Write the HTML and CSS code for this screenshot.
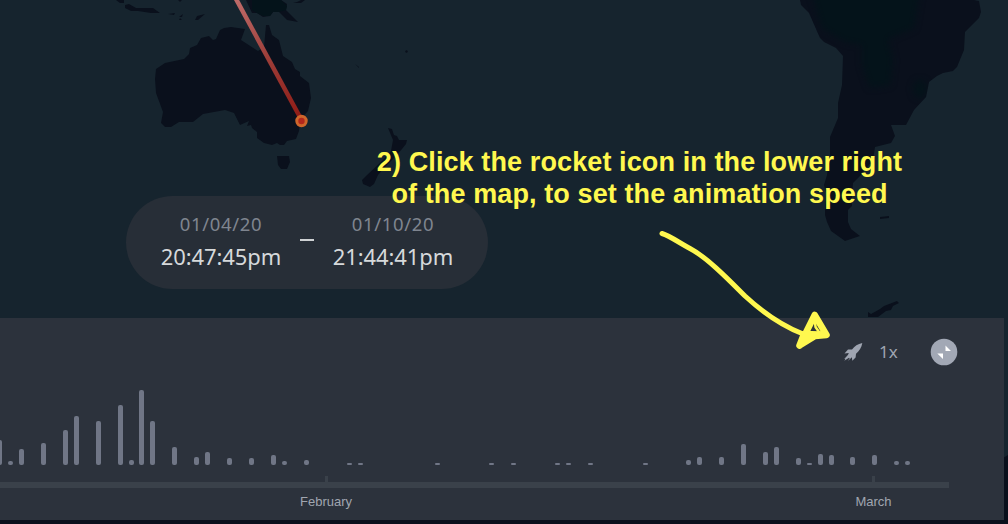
FILE: index.html
```html
<!DOCTYPE html>
<html lang="en">
<head>
<meta charset="utf-8">
<title>Trip map timeline</title>
<link rel="stylesheet" href="styles.css">
</head>
<body>
<main class="app">
  <svg class="map" viewBox="0 0 1008 524" aria-hidden="true">
    <defs>
      <linearGradient id="arc" gradientUnits="userSpaceOnUse" x1="236" y1="0" x2="301" y2="119">
        <stop offset="0" stop-color="#bf6b69"/><stop offset=".5" stop-color="#9c3d38"/><stop offset="1" stop-color="#8f1b15"/>
      </linearGradient>
      <filter id="soft" x="-20%" y="-20%" width="140%" height="140%" color-interpolation-filters="sRGB"><feGaussianBlur stdDeviation="3"/></filter>
      <clipPath id="continent"><path d="M800 0L801 5L809 13L820 38L824 42L836 48L843 56L842 85L838 103L838 118L830 137L830 155L827 175L824 185L825 205L825 215L827 222L831 231L845 241L860 236L851 229L848 222L848 210L852 206L852 194L853 183L860 176L873 160L875 147L891 143L895 136L891 125L906 125L914 110L926 97L929 82L937 76L943 73L953 71L957 67L964 50L965 32L979 18L981 12L979 1L974 0Z"/></clipPath>
    </defs>
    <g class="land">
      <path d="M155 79L156 69L165 63L184 59L189 54L190 48L197 45L201 38L209 36L213 40L216 39L220 30L224 28L231 27L245 29L241 40L258 51L264 47L266 25L269 25L272 35L279 40L283 56L292 62L295 69L300 72L300 76L309 83L311 98L308 111L300 120L299 131L296 139L287 141L284 145L280 145L277 143L272 145L264 143L257 138L257 132L252 128L251 125L247 126L249 121L240 125L234 113L225 110L203 114L193 122L179 122L171 127L165 127L161 123L163 112L156 93Z"/>
      <path d="M277 156H289L290 162L287 169H281L278 165Z"/>
      <path d="M116 0H124V3H120ZM125 5L129 4L136 8L153 8L160 13L151 13L138 11H131L125 8ZM168 14L175 13L174 15ZM179 17L183 14L182 17ZM195 20L197 16L205 14L198 20ZM180 18L182 20H179ZM178 0H182L180 2ZM293 3L301 3L305 0H301L297 2Z"/>
      <path d="M246 0L252 13L257 13L263 17L270 16L273 12L279 12L287 20L298 22L293 17L286 10L287 4L281 0Z"/>
      <path d="M388 128L392 129L394 135L397 136L399 140H407L406 144L402 149L395 157L385 167L378 175L374 184L370 187L363 184L362 180L366 176L383 160L391 151L393 140ZM405 51L407 50L408 52L406 53ZM355 64L359 67L359 68Z"/>
      <path d="M800 0L801 5L809 13L820 38L824 42L836 48L843 56L842 85L838 103L838 118L830 137L830 155L827 175L824 185L826 193L825 205L825 215L827 222L831 231L845 241L860 236L851 229L848 222L848 210L852 206L852 194L853 183L860 176L873 160L875 147L891 143L895 136L891 125L906 125L914 110L926 97L929 82L937 76L943 73L953 71L957 67L964 50L965 32L979 18L981 12L979 1L974 0Z"/>
      <path d="M880 217L889 216L889 218L880 219ZM868 312L871 314L880 309L884 306L897 301L899 303L893 306L891 310L886 311L878 317H868ZM1003 458L1008 455V524H0V519H1003Z"/>
    </g>
    <g clip-path="url(#continent)">
      <g class="forest" filter="url(#soft)">
        <path d="M808 -20H922L914 28L888 39L893 60L890 85L870 88L862 65L862 45L845 42L822 28Z"/>
        <ellipse cx="920" cy="89" rx="7" ry="9"/>
      </g>
    </g>
    <path class="forest" d="M252 0H281L287 6L286 10L279 12H273L270 16H263L257 13L252 10Z"/>
    <path class="arc" d="M235.500 -2L301 119"/>
    <circle class="stop" cx="301.500" cy="121" r="4.700"/>
  </svg>

  <section class="range">
    <div class="moment"><span class="date">01/04/20</span><span class="time">20:47:45pm</span></div>
    <span class="dash"></span>
    <div class="moment"><span class="date">01/10/20</span><span class="time">21:44:41pm</span></div>
  </section>

  <section class="timeline">
    <div class="controls">
      <svg class="rocket" viewBox="0 0 20 20"><path d="M19.300 1C14.800 2 11.600 4.200 9 7.400L5 7.600L1.500 11.500L5.800 10.900L4.900 13L1.200 16.900L2.600 16.800L1.300 18.800L6 15.800L6.700 16.200L4.800 19L8.900 15.300L9.300 18.700L12.600 15.500L13 11.700C16.300 8.800 18.600 5.600 19.300 1Z"/></svg>
      <span class="speed">1x</span>
      <svg class="collapse" viewBox="0 0 28 28"><circle cx="14" cy="14" r="13.300"/><path d="M15.500 7.500L21 13H15.500ZM7.300 15.500H13V21Z"/></svg>
    </div>
    <div class="bars">
      <i style="--n:1;--h:25px"></i><i style="--n:2;--h:4px"></i><i style="--n:3;--h:16px"></i><i style="--n:5;--h:22px"></i><i style="--n:7;--h:35px"></i><i style="--n:8;--h:49px"></i><i style="--n:10;--h:44px"></i><i style="--n:12;--h:60px"></i><i style="--n:13;--h:5px"></i><i style="--n:14;--h:75.500px"></i><i style="--n:15;--h:44px"></i><i style="--n:17;--h:18px"></i><i style="--n:19;--h:8px"></i><i style="--n:20;--h:13px"></i><i style="--n:22;--h:7px"></i><i style="--n:24;--h:7px"></i><i style="--n:26;--h:10px"></i><i style="--n:27;--h:4px"></i><i style="--n:29;--h:5px"></i><i style="--n:33;--h:2px"></i><i style="--n:34;--h:2px"></i><i style="--n:41;--h:2px"></i><i style="--n:46;--h:2px"></i><i style="--n:48;--h:2px"></i><i style="--n:52;--h:2px"></i><i style="--n:53;--h:2px"></i><i style="--n:55;--h:2px"></i><i style="--n:60;--h:2px"></i><i style="--n:64;--h:5px"></i><i style="--n:65;--h:8px"></i><i style="--n:67;--h:8px"></i><i style="--n:69;--h:21px"></i><i style="--n:71;--h:13px"></i><i style="--n:72;--h:18px"></i><i style="--n:74;--h:7px"></i><i style="--n:75;--h:2px"></i><i style="--n:76;--h:11px"></i><i style="--n:77;--h:10px"></i><i style="--n:79;--h:8px"></i><i style="--n:81;--h:10px"></i><i style="--n:83;--h:4px"></i><i style="--n:84;--h:4px"></i>
    </div>
    <div class="axis">
      <span class="month feb">February</span>
      <span class="month mar">March</span>
    </div>
  </section>

  <p class="note"><span class="first">2) Click the rocket icon in the lower right</span><span class="second">of the map, to set the animation speed</span></p>
  <svg class="arrow" viewBox="0 0 1008 524" aria-hidden="true">
    <path d="M662 233.500C670 236 678 242 690 248.500C708 258 730 281 745 296C758 308 778 324 802 333.500"/>
    <path class="head" d="M799.500 345.500L814.700 315L826.500 335L815 336L799.500 345.500L804 334L820 334.500"/>
    <path class="nib" d="M815 322L815.500 327L819 332"/>
  </svg>
</main>
</body>
</html>
```

FILE: styles.css
```css
* { box-sizing: border-box; }
body { margin: 0; background: #16242e; font-family: "Noto Sans", sans-serif; }
.app { position: relative; width: 1008px; height: 524px; overflow: hidden; padding-top: 196px; }
.map, .arrow { position: absolute; left: 0; top: 0; width: 1008px; height: 524px; pointer-events: none; }
.land { fill: #0a101c; }
.forest { fill: #04131a; }
.arc { stroke: url(#arc); stroke-width: 4.5; }
.stop { fill: #b3271c; stroke: #ce662b; stroke-width: 3; }

.range {
  position: relative;
  display: flex;
  align-items: flex-start;
  width: 362px;
  height: 93px;
  margin-left: 126px;
  padding: 15px 34px 0 35px;
  border-radius: 47px;
  background: #272e37;
}
.moment { display: flex; flex-direction: column; align-items: center; width: 120px; }
.date { font-size: 18.500px; line-height: 26px; letter-spacing: .65px; color: #7f858f; white-space: nowrap; }
.time { margin-top: 3px; font-size: 22px; line-height: 32px; letter-spacing: -.1px; color: #d6d9db; white-space: nowrap; }
.dash { flex: none; width: 14px; height: 2px; margin: 28px 19px 0 19px; background: #ced1d3; }

.timeline {
  position: relative;
  width: 1004px;
  height: 202px;
  margin-top: 29px;
  background: #2c323c;
  overflow: hidden;
}
.controls { display: flex; align-items: center; height: 68px; padding-left: 843px; }
.rocket { width: 20px; height: 20px; fill: #9fa5b1; }
.speed { width: 52px; padding: 0 0 2px 16px; margin-right: 15px; font-size: 17px; color: #9fa5b1; }
.collapse { width: 28px; height: 28px; fill: #a2a8b5; }
.collapse path { fill: #fff; }
.bars {
  display: grid;
  grid-template-columns: repeat(84, 10.940px);
  justify-items: center;
  align-items: end;
  height: 79px;
  margin-left: -5.700px;
}
.bars i { grid-row: 1; grid-column: var(--n); width: 5px; height: var(--h); border-radius: 2px; background: #707686; }
.axis {
  display: flex;
  justify-content: space-between;
  width: 949px;
  height: 45px;
  margin-top: 11px;
  background: linear-gradient(#3a414a, #3a414a) 0 6px / 949px 6px no-repeat;
}
.month {
  display: flex;
  flex-direction: column;
  align-items: center;
  width: 60px;
  font: 13px/16px "Liberation Sans", sans-serif;
  color: #a0a6b0;
}
.month::before { content: ""; width: 3px; height: 6px; margin-bottom: 12px; background: #3a414a; }
.feb { margin-left: 296px; }
.mar { margin-right: 45.500px; }

.note {
  position: absolute;
  left: 339.500px;
  top: 146px;
  width: 600px;
  margin: 0;
  display: flex;
  flex-direction: column;
  align-items: center;
  font: bold 27px/32px "Liberation Sans", sans-serif;
  letter-spacing: .110px;
  color: #fff84f;
  white-space: nowrap;
}
.arrow { fill: none; stroke: #fff84f; stroke-width: 5; stroke-linecap: round; stroke-linejoin: round; }
.head { stroke-width: 6.500; }
.nib { stroke-width: 2.500; }
```
